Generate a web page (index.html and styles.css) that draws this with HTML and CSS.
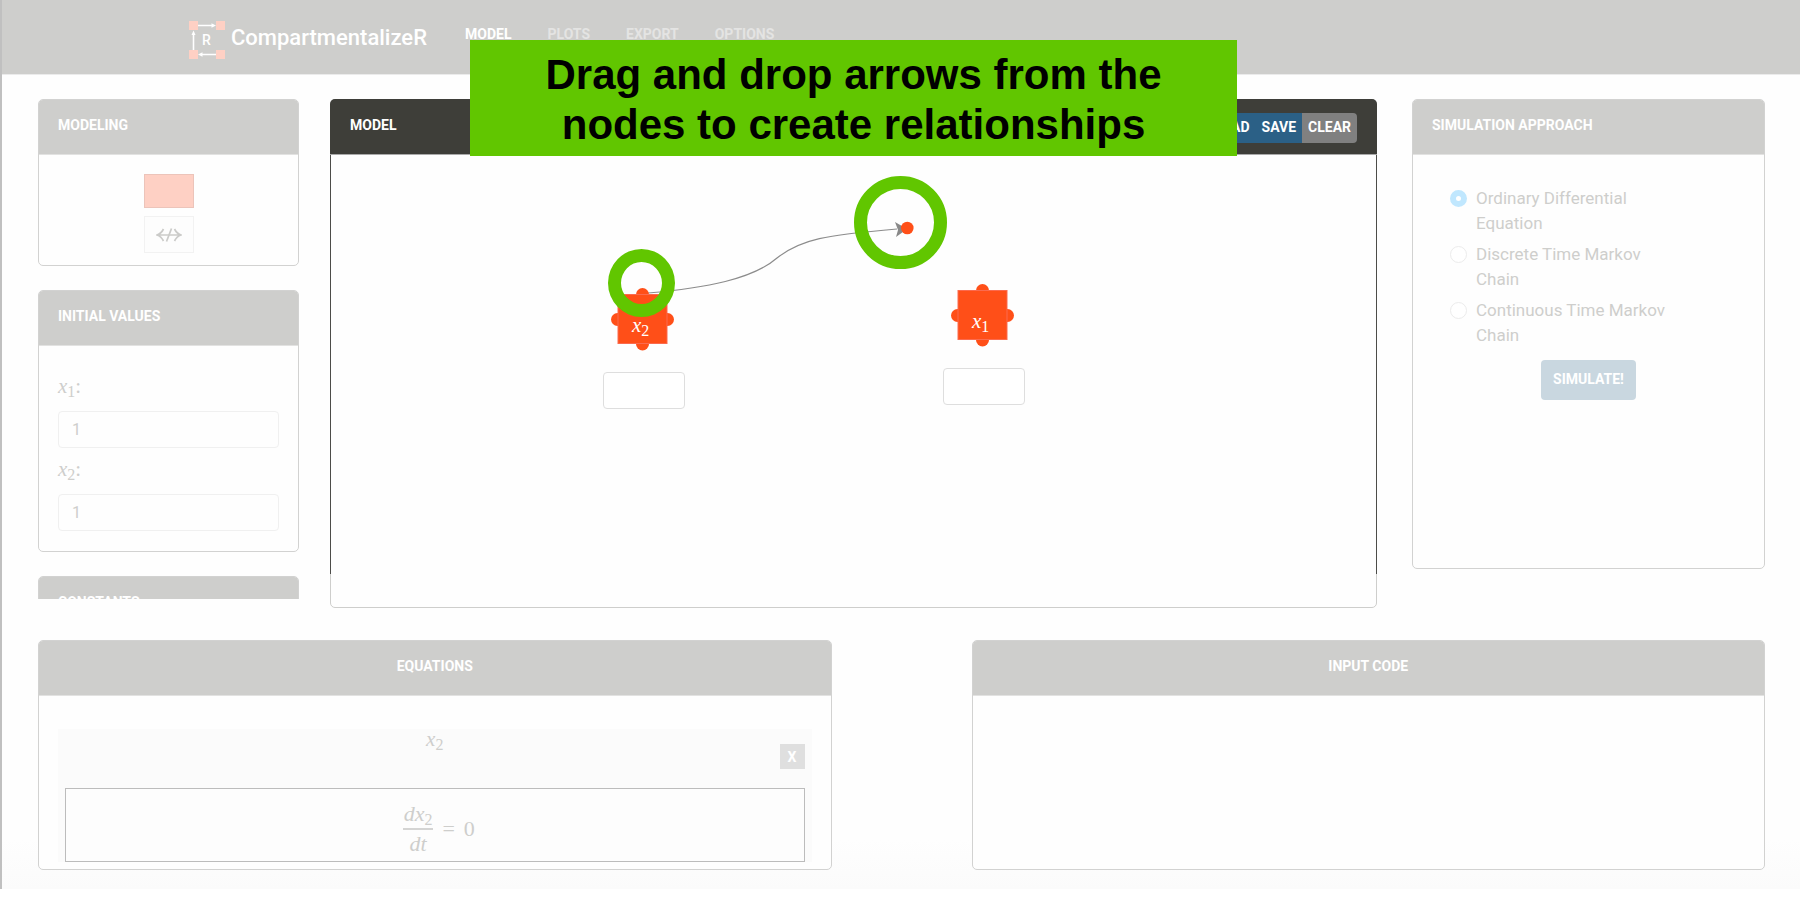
FILE: index.html
```html
<!DOCTYPE html>
<html lang="en">
<head>
<meta charset="utf-8">
<title>CompartmentalizeR</title>
<link rel="stylesheet" href="styles.css">
</head>
<body>
<div class="app">
  <header class="topbar">
    <a class="brand" href="#">
      <svg class="brand-mark" width="36" height="38" viewBox="0 0 36 38" aria-hidden="true">
        <g fill="#fed0c4"><path d="M0 0h9v9H0zM27 0h9v9h-9zM0 29h9v9H0zM27 29h9v9h-9z"/></g>
        <g stroke="#fff" stroke-width="1.600"><path d="M9 4.500h14M13 33.500h14" /><path d="M4.500 14v15"/></g>
        <path fill="#fff" d="M22.500 2.200L27 4.500l-4.500 2.300zM13.500 31.200L9 33.500l4.500 2.300zM2.500 14l2-4.500 2 4.500z"/>
        <text class="brand-letter" x="13" y="24">R</text>
      </svg>
      <span class="brand-name">CompartmentalizeR</span>
    </a>
    <nav class="nav">
      <a class="nav-link active" href="#">MODEL</a>
      <a class="nav-link" href="#">PLOTS</a>
      <a class="nav-link" href="#">EXPORT</a>
      <a class="nav-link" href="#">OPTIONS</a>
    </nav>
  </header>

  <main class="content">
    <div class="workspace">
      <div class="sidebar">
        <section class="panel">
          <h2 class="panel-title">MODELING</h2>
          <div class="tools">
            <button class="tool tool-node" type="button" aria-label="Add compartment"></button>
            <button class="tool tool-link" type="button" aria-label="Remove relationship">
              <svg width="26" height="14" viewBox="0 0 26 14" fill="none" stroke="#cbcbc9" stroke-width="1.700" aria-hidden="true">
                <path d="M1 7h24M7.500 1C6 4 4 6 1 7c3 1 5 3 6.500 6M18.500 1C20 4 22 6 25 7c-3 1-5 3-6.500 6"/><path d="M15.500.5l-5 13"/>
              </svg>
            </button>
          </div>
        </section>
        <section class="panel">
          <h2 class="panel-title">INITIAL VALUES</h2>
          <div class="values">
            <label class="math value-label" for="iv1"><i>x</i><sub>1</sub>:</label>
            <input class="field" id="iv1" type="text" value="1">
            <label class="math value-label" for="iv2"><i>x</i><sub>2</sub>:</label>
            <input class="field" id="iv2" type="text" value="1">
          </div>
        </section>
        <section class="panel">
          <h2 class="panel-title">CONSTANTS</h2>
        </section>
      </div>

      <section class="panel model">
        <div class="model-head">
          <h2 class="model-title">MODEL</h2>
          <div class="actions">
            <button class="action" type="button">LOAD</button>
            <button class="action" type="button">SAVE</button>
            <button class="action action-clear" type="button">CLEAR</button>
          </div>
        </div>
        <div class="canvas">
          <svg class="wires" width="700" height="250" viewBox="0 0 700 250" aria-hidden="true">
            <path d="M317 138C375 133 422 124 446 103C470 84 495 80 566 74" fill="none" stroke="#8c8c8c" stroke-width="1.200"/>
            <path d="M564 67l12 7-11 8 2-7z" fill="#888"/>
            <circle cx="576.300" cy="73" r="6.300" fill="#ff4f18"/>
          </svg>
          <div class="node node-x2">
            <svg class="node-shape" width="82" height="64" viewBox="0 0 82 64" aria-hidden="true">
              <g fill="#ff4f18"><circle cx="39.500" cy="6.500" r="6.500"/><circle cx="39.500" cy="56" r="6.500"/><circle cx="14.500" cy="31.500" r="6.500"/><circle cx="64.500" cy="31.500" r="6.500"/><rect x="15" y="6.500" width="49" height="49" stroke="#fb6a4e"/></g>
            </svg>
            <span class="math node-name"><i>x</i><sub>2</sub></span>
            <input class="node-input" type="text" aria-label="x2 name">
          </div>
          <div class="node node-x1">
            <svg class="node-shape" width="82" height="64" viewBox="0 0 82 64" aria-hidden="true">
              <g fill="#ff4f18"><circle cx="39.500" cy="6.500" r="6.500"/><circle cx="39.500" cy="56" r="6.500"/><circle cx="14.500" cy="31.500" r="6.500"/><circle cx="64.500" cy="31.500" r="6.500"/><rect x="15" y="6.500" width="49" height="49" stroke="#fb6a4e"/></g>
            </svg>
            <span class="math node-name"><i>x</i><sub>1</sub></span>
            <input class="node-input" type="text" aria-label="x1 name">
          </div>
          <div class="ring ring-source"></div>
          <div class="ring ring-target"></div>
        </div>
        <div class="canvas-foot"></div>
        <p class="banner">Drag and drop arrows from the<br>nodes to create relationships</p>
      </section>

      <section class="panel simulation">
        <h2 class="panel-title">SIMULATION APPROACH</h2>
        <form class="approach">
          <label class="option"><input class="radio" type="radio" name="approach" checked>Ordinary Differential Equation</label>
          <label class="option"><input class="radio" type="radio" name="approach">Discrete Time Markov Chain</label>
          <label class="option"><input class="radio" type="radio" name="approach">Continuous Time Markov Chain</label>
        </form>
        <button class="simulate" type="button">SIMULATE!</button>
      </section>
    </div>

    <div class="results">
      <section class="panel">
        <h2 class="panel-title centered">EQUATIONS</h2>
        <div class="equation">
          <div class="equation-head">
            <span class="math equation-name"><i>x</i><sub>2</sub></span>
            <button class="remove" type="button" aria-label="Remove equation">X</button>
          </div>
          <div class="math equation-body">
            <span class="fraction"><span class="numerator"><i>dx</i><sub>2</sub></span><i class="denominator">dt</i></span>
            <span>=</span>
            <span>0</span>
          </div>
        </div>
      </section>
      <section class="panel">
        <h2 class="panel-title centered">INPUT CODE</h2>
      </section>
    </div>
  </main>
</div>
</body>
</html>
```

FILE: styles.css
```css
* { box-sizing: border-box; }

body {
  margin: 0;
  background: #fff;
  font-family: Roboto, "Liberation Sans", sans-serif;
  color: #cececc;
}

h2, p { margin: 0; }
a { text-decoration: none; }
button, input { font-family: inherit; margin: 0; }
button { cursor: pointer; }

.app {
  border-left: 2px solid #c0c0c0;
  background: linear-gradient(to top, #fbfbfb, #fefefe 50px);
  padding-bottom: 19px;
}

/* Top bar */
.topbar {
  display: flex;
  align-items: flex-start;
  height: 75px;
  padding-left: 187px;
  background: #cececc;
  border-bottom: 1px solid #ebebeb;
}
.brand { display: flex; gap: 6px; padding-top: 21px; color: #fff; }
.brand-letter { font-size: 14px; font-weight: 500; fill: #fff; }
.brand-name { font-size: 22px; line-height: 34px; font-weight: 500; }
.nav { display: flex; gap: 36px; margin-left: 38px; padding-top: 24px; }
.nav-link { font-size: 14px; line-height: 20px; font-weight: 700; color: #e4e4e3; }
.nav-link.active { color: #fff; }

/* Panels */
.content { padding: 24px 35px 0 36px; }
.workspace {
  display: grid;
  grid-template-columns: 261fr 1047fr 357fr;
  gap: 31px;
  align-items: start;
}
.panel {
  border: 1px solid #d2d2d1;
  border-radius: 5px;
  background: #fefefe;
}
.panel-title {
  height: 55px;
  padding: 16px 19px;
  border-bottom: 1px solid #e2e2e1;
  border-radius: 4px 4px 0 0;
  background: #cececc;
  color: #fff;
  font-size: 14px;
  line-height: 18px;
  font-weight: 700;
}
.centered { text-align: center; }

.math { font-family: "Liberation Serif", serif; font-size: 21px; }
.math sub { font-size: 16px; line-height: 0; vertical-align: -4px; }

/* Sidebar */
.sidebar {
  display: flex;
  flex-direction: column;
  gap: 24px;
  max-height: 500px;
  overflow: hidden;
}
.sidebar .panel { flex: none; }
.tools {
  display: flex;
  flex-direction: column;
  align-items: center;
  gap: 8px;
  padding: 19px 0 12px;
}
.tool { display: grid; place-items: center; width: 50px; padding: 0; }
.tool-node { height: 34px; border: 1px solid #ecc4ba; background: #fed0c4; }
.tool-link { height: 37px; border: 1px solid #f2f2f2; background: #fdfdfd; }
.values { display: flex; flex-direction: column; padding: 19px 19px 20px; }
.value-label { height: 46px; padding-top: 9px; line-height: 24px; }
.field {
  width: 100%;
  height: 37px;
  padding: 0 13px 1px;
  border: 1px solid #f0f0f0;
  border-radius: 4px;
  background: #fefefe;
  color: #cececc;
  font-size: 16px;
}

/* Model canvas */
.model { position: relative; border-color: #cececc; }
.model-head {
  display: flex;
  justify-content: space-between;
  align-items: flex-start;
  height: 56px;
  margin: -1px -1px 0;
  padding: 14px 20px 0;
  border-bottom: 1px solid #aaa;
  border-radius: 5px 5px 0 0;
  background: #3e3e39;
}
.model-title { padding-top: 3px; font-size: 14px; line-height: 18px; color: #fff; }
.actions { display: flex; border-radius: 4px; overflow: hidden; }
.action {
  height: 30px;
  padding: 0 6px 2px;
  border: 0;
  background: #2b6086;
  color: #fff;
  font-size: 14px;
  font-weight: 700;
}
.action-clear { background: #808080; }
.canvas {
  position: relative;
  height: 419px;
  margin: 0 -1px;
  border: solid #4c4c49;
  border-width: 0 1px;
}
.canvas-foot { height: 33px; }
.wires { position: absolute; left: 0; top: 0; }
.node { position: absolute; width: 82px; }
.node-x2 { left: 272px; top: 133px; }
.node-x1 { left: 612px; top: 129px; }
.node-shape { display: block; }
.node-name { position: absolute; left: 29px; top: 25px; line-height: 24px; color: #fff; }
.node-input {
  display: block;
  width: 82px;
  height: 37px;
  margin-top: 20px;
  border: 1px solid #dedede;
  border-radius: 4px;
  background: #fff;
}
.ring { position: absolute; border: 13px solid #61c600; border-radius: 50%; }
.ring-source { left: 277px; top: 94px; width: 67px; height: 68px; }
.ring-target { left: 523px; top: 21px; width: 93px; height: 93px; }
.banner {
  position: absolute;
  left: 0;
  right: 0;
  top: -60px;
  width: 767px;
  height: 116px;
  margin: 0 auto;
  padding-top: 10px;
  background: #61c600;
  color: #000;
  font-family: "Liberation Sans", sans-serif;
  font-size: 42px;
  line-height: 50px;
  font-weight: 700;
  text-align: center;
}

/* Simulation */
.simulation { min-height: 470px; margin-left: 4px; text-align: center; }
.simulation .panel-title { text-align: left; }
.approach {
  display: flex;
  flex-direction: column;
  gap: 6px;
  padding: 31px 84px 12px 37px;
  text-align: left;
}
.option {
  display: grid;
  grid-template-columns: 17px 1fr;
  gap: 9px;
  font-size: 17px;
  line-height: 25px;
}
.radio {
  appearance: none;
  width: 17px;
  height: 17px;
  margin-top: 4px;
  border: 1px solid #ececec;
  border-radius: 50%;
  background: #fff;
}
.radio:checked { border: 6px solid #c0e7fe; }
.simulate {
  height: 40px;
  padding: 0 12px 3px;
  border: 0;
  border-radius: 4px;
  background: #c9d7e0;
  color: #fff;
  font-size: 14px;
  font-weight: 700;
}

/* Results */
.results {
  display: grid;
  grid-template-columns: 1fr 1fr;
  gap: 140px;
  margin-top: 32px;
}
.equation {
  margin: 33px 19px 7px;
  padding: 0 7px;
  background: #fbfbfb;
}
.equation-head {
  display: grid;
  grid-template-columns: 25px 1fr 25px;
  height: 59px;
}
.equation-name { grid-column: 2; line-height: 20px; text-align: center; }
.remove {
  height: 25px;
  margin-top: 15px;
  padding: 0;
  border: 0;
  background: #dfdfdf;
  color: #fff;
  font-size: 14px;
  font-weight: 700;
}
.equation-body {
  display: flex;
  align-items: center;
  justify-content: center;
  gap: 9px;
  height: 74px;
  padding: 8px 0 0 8px;
  border: 1px solid #bcbcbc;
  background: #fdfdfd;
  font-size: 22px;
}
.fraction { text-align: center; line-height: 28px; }
.numerator { display: block; padding: 0 1px; border-bottom: 2px solid #d4d4d3; }
.denominator { display: block; }
```
